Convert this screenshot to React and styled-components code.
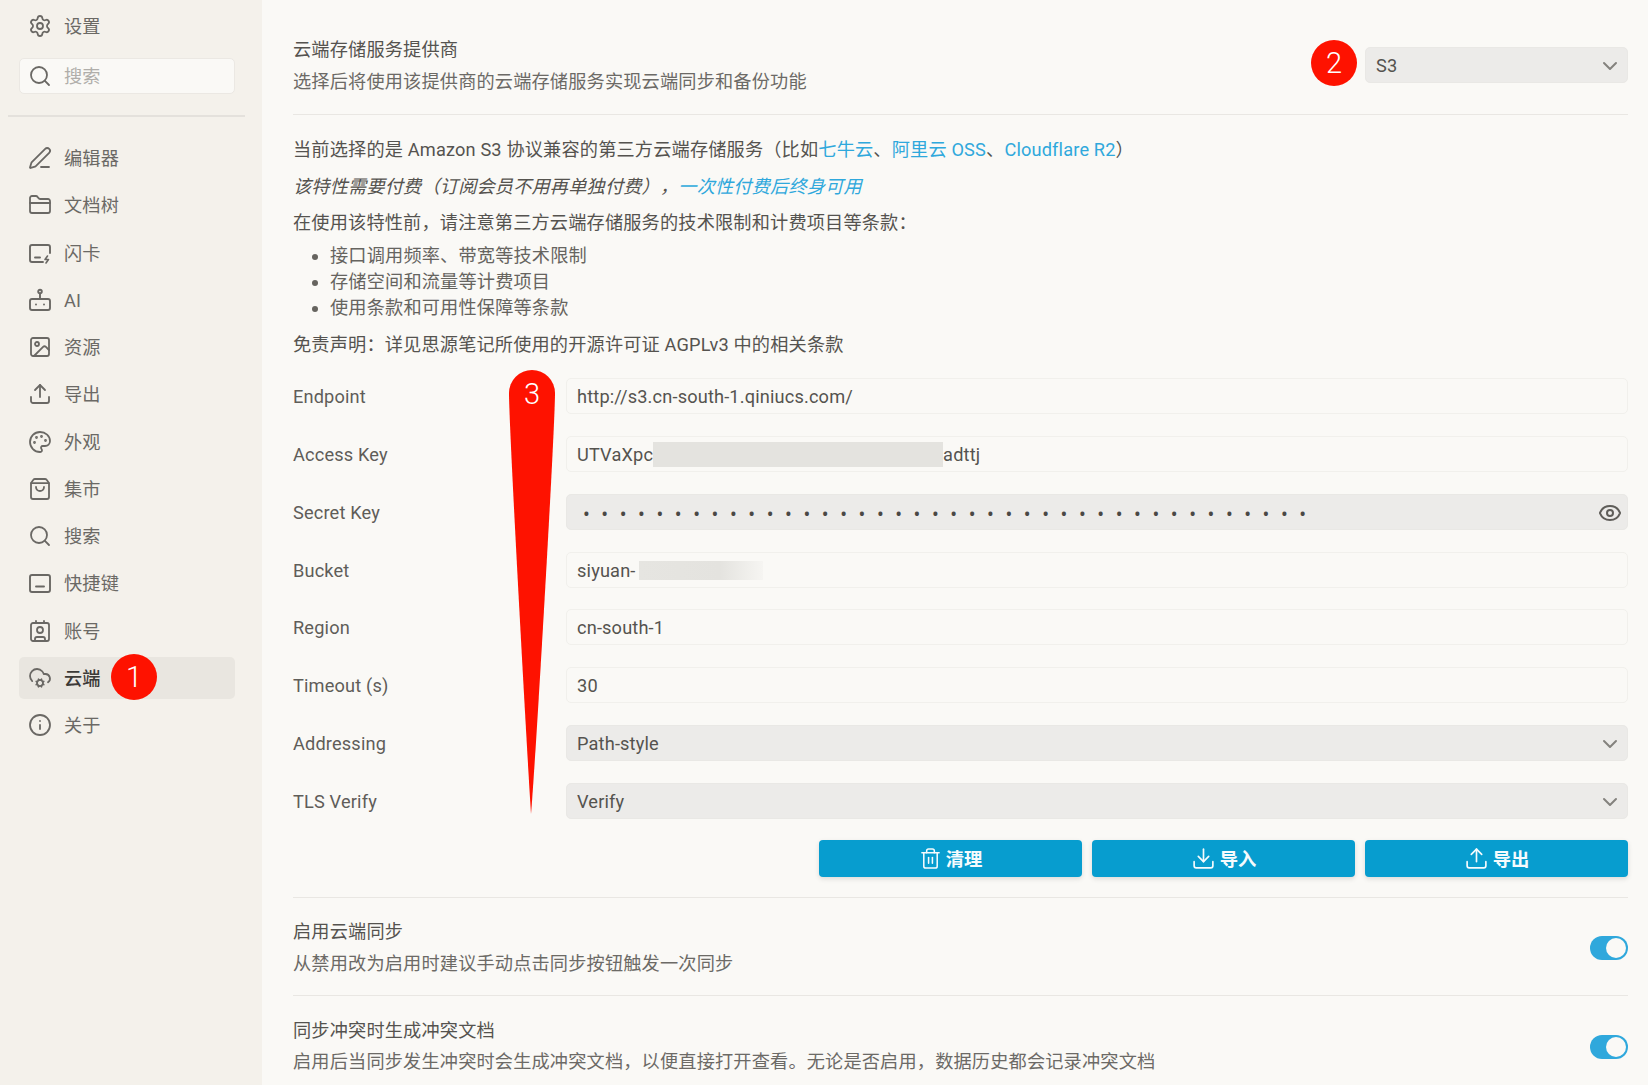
import React from 'react'
import styled, { createGlobalStyle } from 'styled-components'
import {
  Settings, Search, PenLine, FolderClosed, Image, Upload, Download, Palette,
  ShoppingBag, Contact, CloudCog, Info, Eye, Trash2, ChevronDown,
} from 'lucide-react'

const GlobalStyle = createGlobalStyle`
  html, body {
    margin: 0;
    padding: 0;
    background: #faf9f6;
  }
  * {
    box-sizing: border-box;
  }
`

const FONT = `Roboto, "Noto Sans CJK SC", sans-serif`

const Page = styled.div`
  width: 1648px;
  height: 1085px;
  display: flex;
  overflow: hidden;
  font-family: ${FONT};
  font-size: 18.2px;
  letter-spacing: 0.16px;
  line-height: 26px;
  color: #5a5854;
  text-spacing-trim: space-all;
`

/* sidebar */

const Sidebar = styled.aside`
  width: 262px;
  flex-shrink: 0;
  padding: 5px 27px 0 19px;
  background: #f4f1eb;
`

const NavRow = styled.div`
  position: relative;
  height: 42px;
  display: flex;
  align-items: center;
  gap: 12px;
  padding-left: 9px;
  border-radius: 5px;
  color: ${props => props.active ? '#3c3a37' : '#6b6965'};
  font-weight: ${props => props.active ? 500 : 400};
  background: ${props => props.active ? '#e9e6e0' : 'transparent'};
  svg {
    flex-shrink: 0;
    color: #6a6864;
  }
`

const NavLabel = styled.span`
  padding-top: 2px;
`

const SearchBox = styled.div`
  height: 36px;
  margin-top: 11px;
  display: flex;
  align-items: center;
  gap: 12px;
  padding-left: 8px;
  border: 1px solid #ebe8e3;
  border-radius: 5px;
  background: #faf9f6;
  color: #b0aeaa;
  svg {
    color: #6a6864;
  }
`

const SideDivider = styled.div`
  height: 2px;
  margin: 21px -10px 20px -11px;
  background: #e4e1dc;
`

const NavList = styled.nav`
  display: flex;
  flex-direction: column;
  gap: 5.25px;
`

/* annotations laid over the page */

const Badge = styled.span`
  position: absolute;
  width: 46px;
  height: 46px;
  display: flex;
  align-items: center;
  justify-content: center;
  border-radius: 50%;
  background: #fe1200;
  color: #fff;
  font-size: 29px;
  font-weight: 300;
`

const NavBadge = styled(Badge)`
  left: 92px;
  top: -3px;
`

const SelectBadge = styled(Badge)`
  right: calc(100% + 9px);
  top: -8px;
`

const Drop = styled.div`
  position: absolute;
  left: 216px;
  top: -8px;
  width: 46px;
  height: 444px;
  color: #fff;
  font-size: 29px;
  font-weight: 300;
  text-align: center;
  line-height: 48px;
  svg {
    position: absolute;
    inset: 0;
  }
  span {
    position: relative;
  }
`

/* main column */

const Main = styled.main`
  flex: 1;
  min-width: 0;
  padding: 0 20px 0 31px;
  background: #faf9f6;
`

const Section = styled.section`
  display: flex;
  align-items: center;
  justify-content: space-between;
  padding: ${props => props.top ? '37px 0 19px' : '21.5px 0 18.5px'};
  border-bottom: 1px solid #e9e7e3;
`

const SettingText = styled.div`
  display: flex;
  flex-direction: column;
  gap: 5.5px;
`

const Title = styled.div`
  color: #55534f;
`

const Description = styled.div`
  color: #6c6a66;
`

const Notes = styled.div`
  padding-top: 22.5px;
  color: #55534f;
`

const Note = styled.p`
  margin: 0 0 10.5px;
  font-style: ${props => props.italic ? 'italic' : 'normal'};
`

const Link = styled.a`
  color: #2fa8dc;
`

const Terms = styled.ul`
  margin: -4px 0 11px;
  padding-left: 37px;
  color: #66645f;
`

const Form = styled.div`
  position: relative;
  margin-top: 20.5px;
  display: flex;
  flex-direction: column;
  gap: 21.85px;
`

const FormRow = styled.div`
  display: flex;
  align-items: center;
`

const FieldLabel = styled.label`
  width: 273px;
  flex-shrink: 0;
  padding-top: 2px;
  color: #5f5d59;
`

const Field = styled.div`
  position: relative;
  flex: ${props => props.width ? `0 0 ${props.width}` : 1};
  height: 36px;
  display: flex;
  align-items: center;
  justify-content: space-between;
  padding: 2px 5px 0 10px;
  border: 1px solid ${props => props.filled ? '#e9e8e5' : '#f1f0ec'};
  border-radius: 5px;
  background: ${props => props.filled ? '#ecebe9' : '#faf9f6'};
  color: #55534f;
  svg {
    flex-shrink: 0;
    color: #84827e;
  }
`

const ProviderSelect = styled(Field)`
  margin-top: -2px;
`

const Inline = styled.span`
  display: flex;
  align-items: center;
`

const Blur = styled.span`
  height: ${props => props.tall ? '25px' : '19px'};
  width: ${props => props.width};
  margin-left: ${props => props.tall ? '0' : '3px'};
  background: ${props => props.tall
    ? '#e4e3df'
    : 'linear-gradient(90deg, #e6e5e1 0%, #e4e3df 65%, #f6f5f2 100%)'};
`

const Secret = styled.span`
  font-family: "Noto Sans", sans-serif;
  font-size: 18px;
  letter-spacing: 11.6px;
  padding-left: 6px;
  line-height: 1;
  color: #4a4845;
`

const Actions = styled.div`
  display: flex;
  justify-content: flex-end;
  gap: 10px;
  margin-top: 21px;
  padding-bottom: 20px;
  border-bottom: 1px solid #e9e7e3;
`

const ActionButton = styled.button`
  width: 263px;
  height: 37px;
  display: flex;
  align-items: center;
  justify-content: center;
  gap: 4px;
  border: none;
  border-radius: 4px;
  background: #079dcf;
  color: #f6fbfd;
  font-family: ${FONT};
  font-size: 18.36px;
  font-weight: 700;
  box-shadow: 0 2px 5px rgba(0, 0, 0, 0.12);
`

const Toggle = styled.span`
  width: 38px;
  height: 24px;
  display: flex;
  align-items: center;
  justify-content: flex-end;
  padding-right: 2px;
  border-radius: 12px;
  background: #2fa8dc;
  &::after {
    content: '';
    width: 20px;
    height: 20px;
    border-radius: 50%;
    background: #faf9f6;
  }
`

const FlashcardIcon = () => (
  <svg width="24" height="24" viewBox="0 0 24 24" fill="none" stroke="currentColor" strokeWidth="1.9" strokeLinecap="round" strokeLinejoin="round">
    <path d="M22 12V6a2 2 0 0 0-2-2H4a2 2 0 0 0-2 2v13a2 2 0 0 0 2 2h11" />
    <path d="M7 16.5h5" />
    <path d="M19.5 15l-2.5 3.5h3.5L18 22" strokeWidth="1.6" />
  </svg>
)

const BotIcon = () => (
  <svg width="24" height="24" viewBox="0 0 24 24" fill="none" stroke="currentColor" strokeWidth="1.9" strokeLinecap="round" strokeLinejoin="round">
    <circle cx="12" cy="3.5" r="1.8" />
    <path d="M12 5.5V11" />
    <rect x="2" y="11" width="20" height="11" rx="2" />
    <path d="M8 16.5h.01M16 16.5h.01" />
  </svg>
)

const KeyboardIcon = () => (
  <svg width="24" height="24" viewBox="0 0 24 24" fill="none" stroke="currentColor" strokeWidth="1.9" strokeLinecap="round" strokeLinejoin="round">
    <rect x="2" y="4" width="20" height="17" rx="2" />
    <path d="M8 15.5h8" />
  </svg>
)

const DropShape = () => (
  <svg width="46" height="444" viewBox="0 0 46 444">
    <path d="M0 23a23 23 0 0 1 46 0C46 60 26 400 22 444C19 400 0 60 0 23z" fill="#fe1200" />
  </svg>
)

const navItems = [
  [PenLine, '编辑器'],
  [FolderClosed, '文档树'],
  [FlashcardIcon, '闪卡'],
  [BotIcon, 'AI'],
  [Image, '资源'],
  [Upload, '导出'],
  [Palette, '外观'],
  [ShoppingBag, '集市'],
  [Search, '搜索'],
  [KeyboardIcon, '快捷键'],
  [Contact, '账号'],
  [CloudCog, '云端', true],
  [Info, '关于'],
]

const App = () => (
  <Page>
    <GlobalStyle />
    <Sidebar>
      <NavRow>
        <Settings size={24} strokeWidth={1.8} />
        <NavLabel>设置</NavLabel>
      </NavRow>
      <SearchBox>
        <Search size={24} strokeWidth={1.8} />
        <NavLabel>搜索</NavLabel>
      </SearchBox>
      <SideDivider />
      <NavList>
        {navItems.map(([Icon, label, active]) => (
          <NavRow key={label} active={active}>
            <Icon size={24} strokeWidth={1.8} />
            <NavLabel>{label}</NavLabel>
            {active && <NavBadge>1</NavBadge>}
          </NavRow>
        ))}
      </NavList>
    </Sidebar>

    <Main>
      <Section top>
        <SettingText>
          <Title>云端存储服务提供商</Title>
          <Description>选择后将使用该提供商的云端存储服务实现云端同步和备份功能</Description>
        </SettingText>
        <ProviderSelect filled width="263px">
          S3
          <ChevronDown size={24} />
          <SelectBadge>2</SelectBadge>
        </ProviderSelect>
      </Section>

      <Notes>
        <Note>当前选择的是 Amazon S3 协议兼容的第三方云端存储服务（比如<Link>七牛云</Link>、<Link>阿里云 OSS</Link>、<Link>Cloudflare R2</Link>）</Note>
        <Note italic>该特性需要付费（订阅会员不用再单独付费），<Link>一次性付费后终身可用</Link></Note>
        <Note>在使用该特性前，请注意第三方云端存储服务的技术限制和计费项目等条款：</Note>
        <Terms>
          <li>接口调用频率、带宽等技术限制</li>
          <li>存储空间和流量等计费项目</li>
          <li>使用条款和可用性保障等条款</li>
        </Terms>
        <Note>免责声明：详见思源笔记所使用的开源许可证 AGPLv3 中的相关条款</Note>
      </Notes>

      <Form>
        <Drop>
          <DropShape />
          <span>3</span>
        </Drop>
        <FormRow>
          <FieldLabel>Endpoint</FieldLabel>
          <Field>http://s3.cn-south-1.qiniucs.com/</Field>
        </FormRow>
        <FormRow>
          <FieldLabel>Access Key</FieldLabel>
          <Field>
            <Inline>UTVaXpc<Blur tall width="290px" />adttj</Inline>
          </Field>
        </FormRow>
        <FormRow>
          <FieldLabel>Secret Key</FieldLabel>
          <Field filled>
            <Secret>{'•'.repeat(40)}</Secret>
            <Eye size={24} color="#5f5d59" />
          </Field>
        </FormRow>
        <FormRow>
          <FieldLabel>Bucket</FieldLabel>
          <Field>
            <Inline>siyuan-<Blur width="124px" /></Inline>
          </Field>
        </FormRow>
        <FormRow>
          <FieldLabel>Region</FieldLabel>
          <Field>cn-south-1</Field>
        </FormRow>
        <FormRow>
          <FieldLabel>Timeout (s)</FieldLabel>
          <Field>30</Field>
        </FormRow>
        <FormRow>
          <FieldLabel>Addressing</FieldLabel>
          <Field filled>Path-style<ChevronDown size={24} /></Field>
        </FormRow>
        <FormRow>
          <FieldLabel>TLS Verify</FieldLabel>
          <Field filled>Verify<ChevronDown size={24} /></Field>
        </FormRow>
      </Form>

      <Actions>
        <ActionButton><Trash2 size={23} strokeWidth={1.6} />清理</ActionButton>
        <ActionButton><Download size={25} strokeWidth={1.6} />导入</ActionButton>
        <ActionButton><Upload size={25} strokeWidth={1.6} />导出</ActionButton>
      </Actions>

      <Section>
        <SettingText>
          <Title>启用云端同步</Title>
          <Description>从禁用改为启用时建议手动点击同步按钮触发一次同步</Description>
        </SettingText>
        <Toggle />
      </Section>

      <Section>
        <SettingText>
          <Title>同步冲突时生成冲突文档</Title>
          <Description>启用后当同步发生冲突时会生成冲突文档，以便直接打开查看。无论是否启用，数据历史都会记录冲突文档</Description>
        </SettingText>
        <Toggle />
      </Section>
    </Main>
  </Page>
)

export default App
